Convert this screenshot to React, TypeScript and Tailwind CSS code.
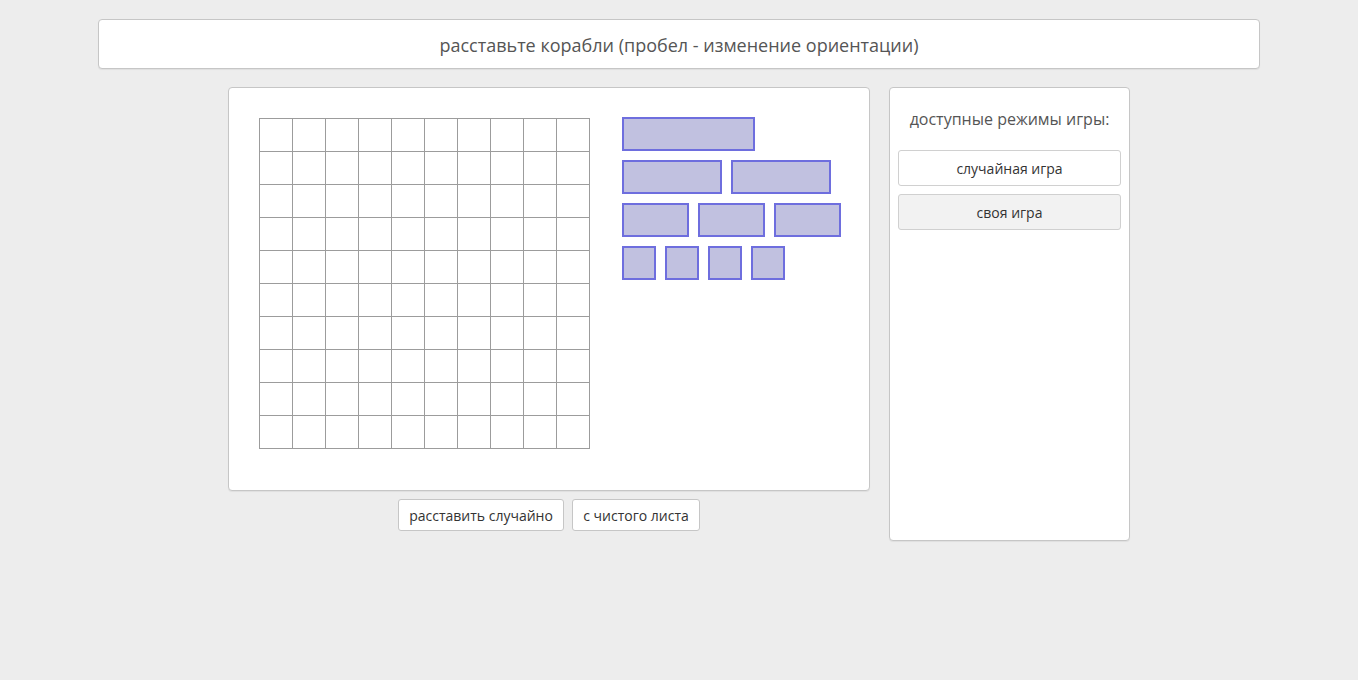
import React from "react";

const ships: number[][] = [[4], [3, 3], [2, 2, 2], [1, 1, 1, 1]];
const shipW: Record<number, string> = { 1: "w-[34px]", 2: "w-[67px]", 3: "w-[100px]", 4: "w-[133px]" };

export default function App() {
  return (
    <div className="min-h-[680px] w-full bg-[#ededed] flex flex-col items-center pt-[19px] text-[#333]" style={{ fontFamily: '"Open Sans", "Noto Sans", sans-serif' }}>
      <div className="w-[1162px] h-[50px] bg-white border border-[#c6c6c6] rounded-[4px] shadow-[0_1px_1px_rgba(0,0,0,0.06)] flex items-center justify-center pt-[2px] text-[18px] text-[#555]">
        расставьте корабли (пробел - изменение ориентации)
      </div>
      <div className="flex gap-[19px] mt-[18px]">
        <div className="flex flex-col items-center">
          <div className="w-[642px] h-[404px] bg-white border border-[#c6c6c6] rounded-[4px] shadow-[0_1px_1px_rgba(0,0,0,0.06)] p-[30px] flex gap-[32px]">
            <div className="border-l border-t border-[#9c9c9c] grid grid-cols-[repeat(10,33px)] w-[331px] h-[331px] shrink-0">
              {Array.from({ length: 100 }).map((_, i) => (
                <div key={i} className="h-[33px] border-r border-b border-[#9c9c9c]" />
              ))}
            </div>
            <div className="flex flex-col gap-[9px] -mt-px">
              {ships.map((row, r) => (
                <div key={r} className="flex gap-[9px]">
                  {row.map((n, j) => (
                    <div key={j} className={`${shipW[n]} h-[34px] bg-[#c1c1e0] border-2 border-[#6e6ede]`} />
                  ))}
                </div>
              ))}
            </div>
          </div>
          <div className="flex gap-[8px] mt-[8px]">
            <button className="h-[32px] w-[166px] bg-white border border-[#c6c6c6] rounded-[3px] text-[14px] text-[#333]">расставить случайно</button>
            <button className="h-[32px] w-[128px] bg-white border border-[#c6c6c6] rounded-[3px] text-[14px] text-[#333]">с чистого листа</button>
          </div>
        </div>
        <div className="w-[241px] h-[454px] bg-white border border-[#c6c6c6] rounded-[4px] shadow-[0_1px_1px_rgba(0,0,0,0.06)] p-[8px] flex flex-col">
          <div className="text-center text-[16px] leading-[24px] mt-[11px] mb-[19px] text-[#555]">доступные режимы игры:</div>
          <button className="h-[36px] w-full bg-white border border-[#d0d0d0] rounded-[3px] text-[14px] text-[#333]">случайная игра</button>
          <button className="h-[36px] w-full mt-[8px] bg-[#f2f2f2] border border-[#d0d0d0] rounded-[3px] text-[14px] text-[#333]">своя игра</button>
        </div>
      </div>
    </div>
  );
}
